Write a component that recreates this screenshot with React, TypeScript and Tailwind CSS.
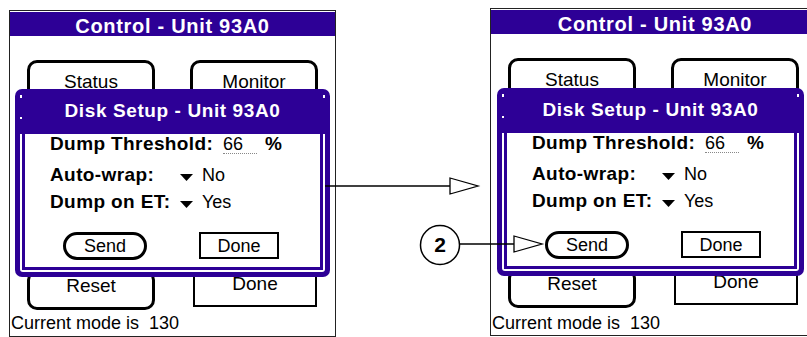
const PURPLE = "bg-[#2d0096]";

type ScreenProps = {
  frame: string;
  dialog: string;
  mode: string;
};

const Caret = () => (
  <svg width="13" height="7" viewBox="0 0 13 7" className="mt-[9px] shrink-0">
    <polygon points="0,0 13,0 6.5,7" fill="#000" />
  </svg>
);

const DiskSetup = ({ className }: { className: string }) => (
  <div className={`absolute ${PURPLE} rounded-[7px] ${className}`}>
    {/* title bar, merges with the frame */}
    <div className="relative h-[32px] pt-[12px] text-center text-[19px] font-bold leading-[20px] tracking-[0.6px] text-white">
      Disk Setup - Unit 93A0
      <span className="absolute left-[5px] top-[6px] h-[3px] w-[2px] bg-white" />
      <span className="absolute right-[5px] top-[6px] h-[3px] w-[2px] bg-white" />
      <span className="absolute bottom-[2px] left-[5px] h-[2px] w-[2px] bg-white" />
    </div>
    <div className="px-[5px] pb-[5px]">
      <div className="rounded-b-[3px] bg-white px-[2px] pb-[2px]">
        <div className="border-[3px] border-t-0 border-[#2d0096] bg-white pb-[7px] pl-[25px] text-black">
          <div className="mt-[13px] flex h-[20px] leading-[20px]">
            <span className="w-[173px] shrink-0 text-[19px] font-bold tracking-[0.4px]">Dump Threshold:</span>
            <span className="h-[20px] w-[34px] border-b border-dotted border-[#888] text-[18px]">66</span>
            <span className="ml-[8px] text-[19px] font-bold">%</span>
          </div>
          <div className="mt-[11px] flex h-[20px] leading-[20px]">
            <span className="w-[130px] shrink-0 text-[19px] font-bold tracking-[0.4px]">Auto-wrap:</span>
            <Caret />
            <span className="ml-[9px] text-[18px]">No</span>
          </div>
          <div className="mt-[7px] flex h-[20px] leading-[20px]">
            <span className="w-[130px] shrink-0 text-[19px] font-bold tracking-[0.4px]">Dump on ET:</span>
            <Caret />
            <span className="ml-[9px] text-[18px]">Yes</span>
          </div>
          <div className="mt-[20px] flex items-start">
            <div className="ml-[13px] flex h-[28px] w-[84px] items-center justify-center rounded-full border-[3px] border-black text-[18px] leading-none">
              Send
            </div>
            <div className="ml-[52px] flex h-[27px] w-[80px] items-center justify-center border-2 border-black text-[18px] leading-none">
              Done
            </div>
          </div>
        </div>
      </div>
    </div>
  </div>
);

const Screen = ({ frame, dialog, mode }: ScreenProps) => (
  <div className={`absolute border border-[#222] bg-white ${frame}`}>
    <div className={`mt-[1px] h-[24px] ${PURPLE} text-center text-[20px] font-bold leading-[29px] tracking-[0.7px] text-white`}>
      Control - Unit 93A0
    </div>

    {/* buttons behind the dialog */}
    <div className="mt-[24px] flex pl-[17px]">
      <div className="flex h-[40px] w-[128px] justify-center rounded-[10px] border-[3px] border-black pt-[4px] text-[19px] leading-[30px]">
        Status
      </div>
      <div className="ml-[35px] flex h-[40px] w-[128px] justify-center rounded-[10px] border-[3px] border-black pt-[4px] text-[19px] leading-[30px]">
        Monitor
      </div>
    </div>
    <div className="mt-[167px] flex h-[43px] items-start pl-[17px]">
      <div className="mt-[3px] flex h-[40px] w-[128px] items-end justify-center rounded-[10px] border-[3px] border-black pb-[10px] text-[19px] leading-[22px]">
        Reset
      </div>
      <div className="ml-[38px] flex h-[40px] w-[124px] items-end justify-center border-2 border-black pb-[10px] text-[19px] leading-[22px]">
        Done
      </div>
    </div>
    <div className={`${mode} pl-[1px] text-[18px] leading-[20px] whitespace-pre`}>Current mode is  130</div>

    <DiskSetup className={dialog} />
  </div>
);

export default function App() {
  return (
    <div className="relative h-[337px] w-[807px] overflow-hidden bg-white font-['Liberation_Sans',Arial,sans-serif] text-black">
      <Screen frame="left-[9px] top-[10px] h-[327px] w-[327px]" dialog="left-[5px] top-[78px] w-[315px]" mode="mt-[3px]" />
      <Screen frame="left-[490px] top-[8px] h-[328px] w-[330px]" dialog="left-[6px] top-[79px] w-[307px]" mode="mt-[5px]" />

      {/* callout arrows */}
      <svg className="pointer-events-none absolute left-0 top-0" width="807" height="337" viewBox="0 0 807 337">
        <line x1="325" y1="186" x2="450" y2="186" stroke="#000" strokeWidth="1.6" />
        <polygon points="450,178 478,186 450,194" fill="#fff" stroke="#000" strokeWidth="1.3" />
        <circle cx="440" cy="245" r="19.5" fill="#fff" stroke="#000" strokeWidth="1.5" />
        <text x="440" y="252" textAnchor="middle" fontFamily="Liberation Sans, Arial, sans-serif" fontWeight="bold" fontSize="21">
          2
        </text>
        <line x1="459.5" y1="244" x2="514" y2="244" stroke="#000" strokeWidth="1.6" />
        <polygon points="514,236 542,244 514,252" fill="#fff" stroke="#000" strokeWidth="1.3" />
      </svg>
    </div>
  );
}
